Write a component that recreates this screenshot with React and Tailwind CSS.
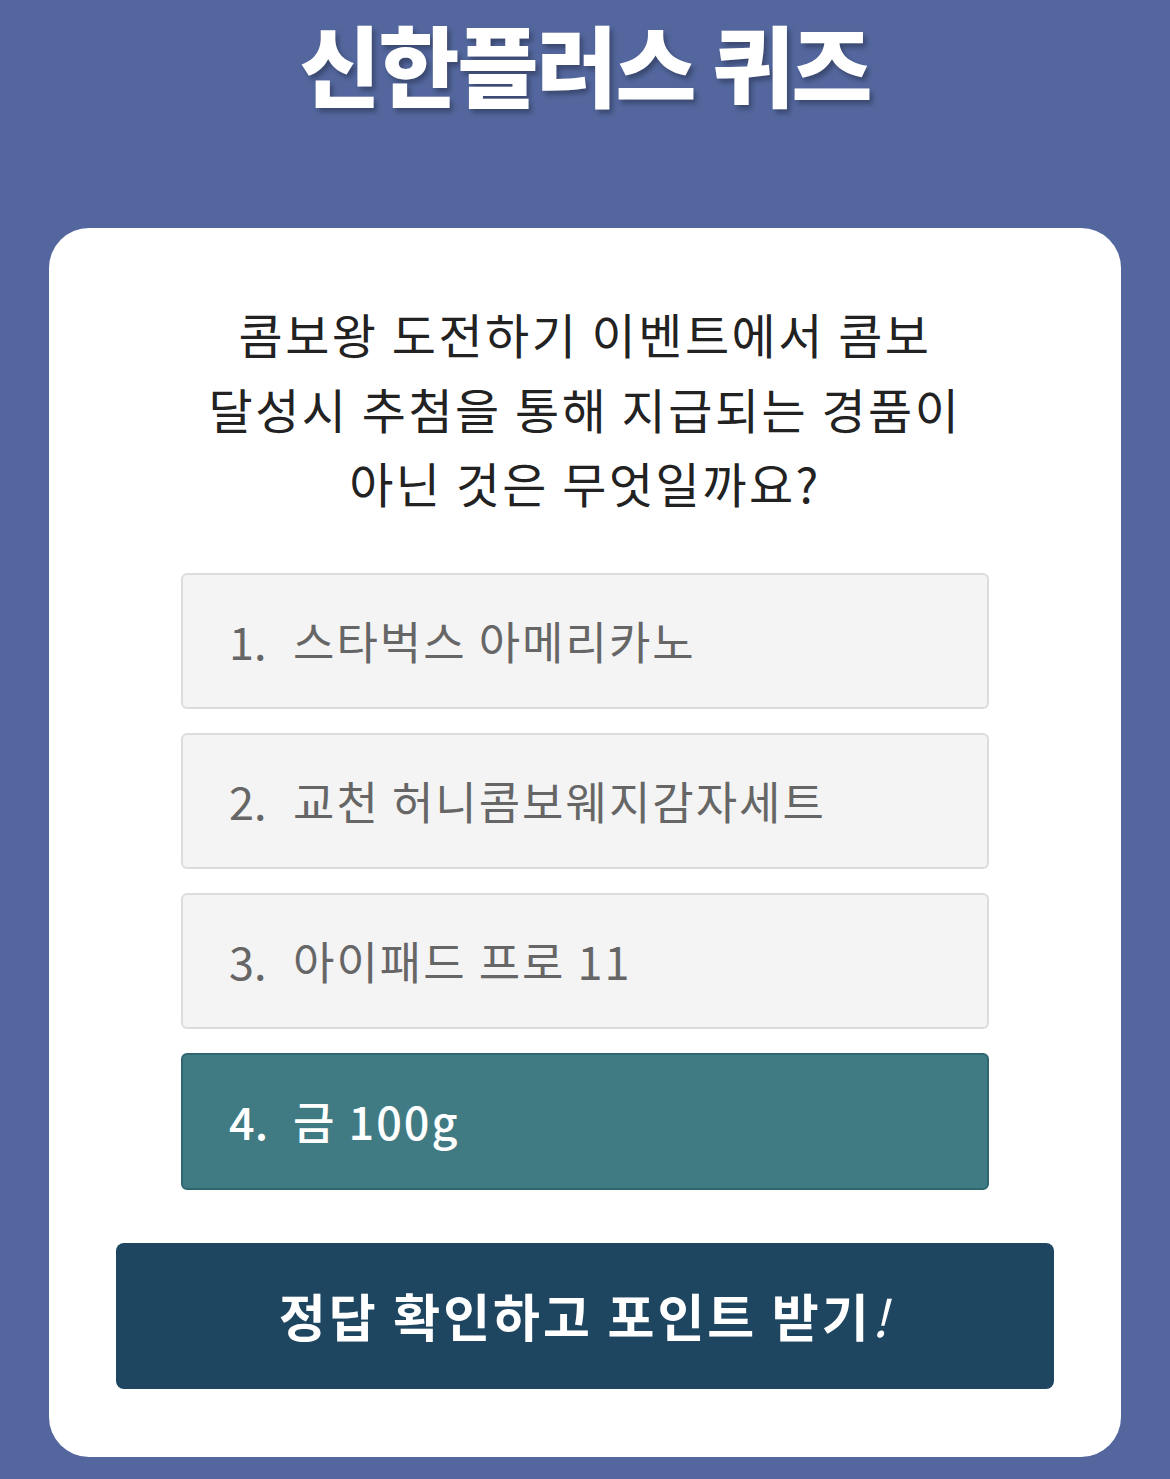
import React from "react";

const options = [
  { no: "1.", label: "스타벅스 아메리카노" },
  { no: "2.", label: "교천 허니콤보웨지감자세트" },
  { no: "3.", label: "아이패드 프로 11" },
  { no: "4.", label: "금 100g", selected: true },
];

function App() {
  return (
    <div className="min-h-screen bg-[#53679e] font-['Noto_Sans_CJK_KR',sans-serif] pb-[22px]">
      {/* Title */}
      <div className="h-[228px] flex justify-center pt-[18px]">
        <h1 className="text-white text-[88px] font-black leading-none tracking-[-2px] [text-shadow:3px_4px_5px_rgba(0,0,0,0.3)]">
          신한플러스 퀴즈
        </h1>
      </div>

      {/* Quiz card */}
      <div className="mx-[49px] bg-white rounded-[40px] pt-[68px] pb-[68px] flex flex-col items-center">
        <p className="text-[#222] text-[48px] leading-[74.5px] tracking-[2.5px] text-center font-normal">
          콤보왕 도전하기 이벤트에서 콤보
          <br />
          달성시 추첨을 통해 지급되는 경품이
          <br />
          아닌 것은 무엇일까요?
        </p>

        <div className="mt-[53px] w-[808px] flex flex-col gap-[24px]">
          {options.map((o) => (
            <div
              key={o.no}
              className={
                o.selected
                  ? "h-[137px] rounded-[6px] border-2 border-[#2f6670] bg-[#407b84] text-white flex items-center pl-[46px] text-[45px] tracking-[2px] font-medium"
                  : "h-[136px] rounded-[6px] border-2 border-[#dcdcdc] bg-[#f4f4f4] text-[#666] flex items-center pl-[46px] text-[45px] tracking-[2px] font-normal"
              }
            >
              <span className="w-[64px] tracking-normal">{o.no}</span>
              <span>{o.label}</span>
            </div>
          ))}
        </div>

        <button className="mt-[53px] w-[938px] h-[146px] rounded-[8px] bg-[#1f4660] text-white text-[51px] font-bold tracking-[3px] flex items-center justify-center">
          정답 확인하고 포인트 받기<span className="italic font-normal">!</span>
        </button>
      </div>
    </div>
  );
}

export default App;
